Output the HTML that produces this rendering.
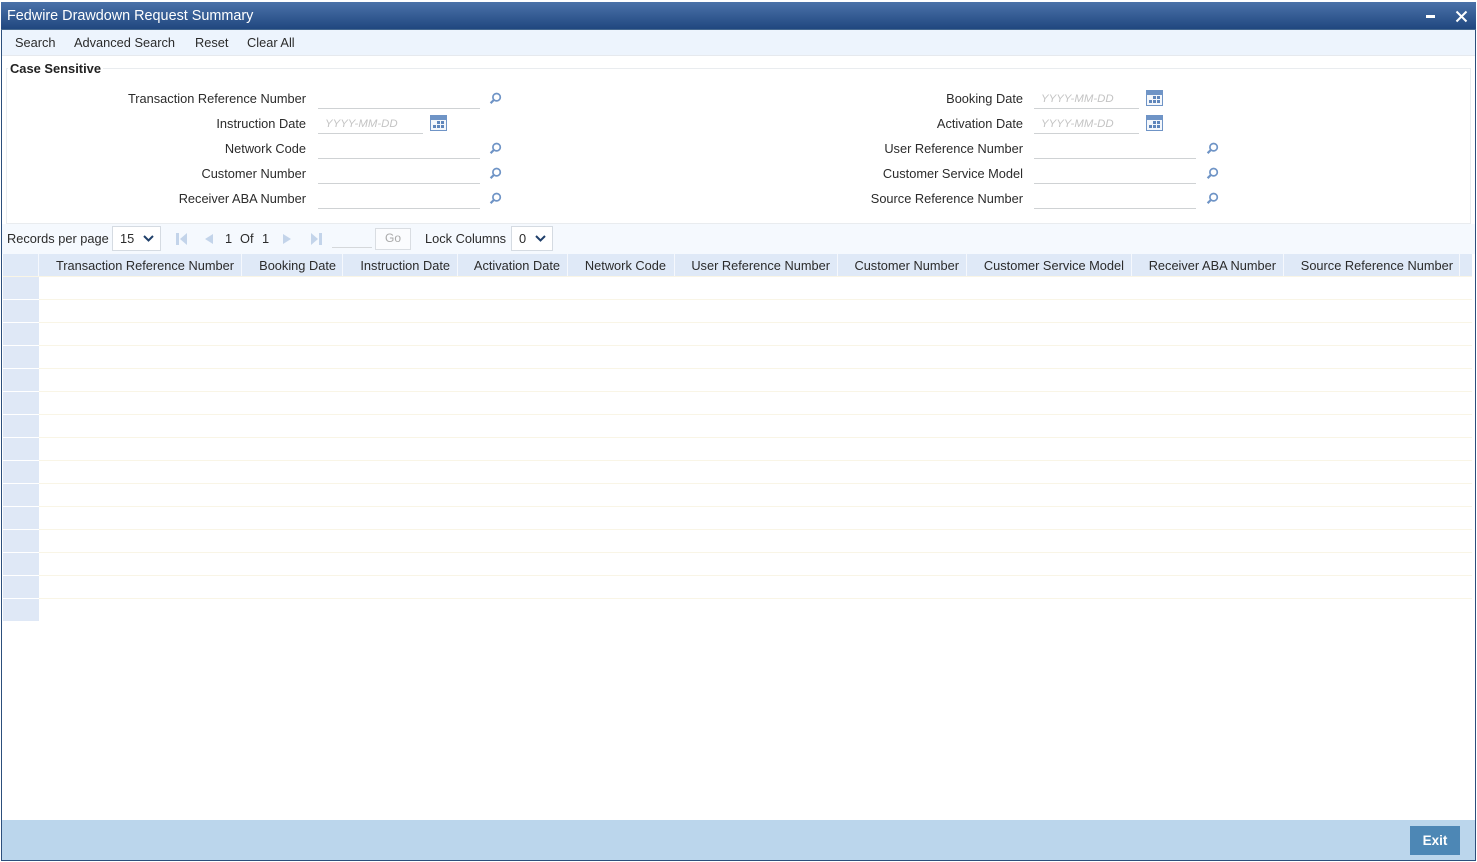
<!DOCTYPE html>
<html><head><meta charset="utf-8"><title>Fedwire Drawdown Request Summary</title>
<style>
html,body{margin:0;padding:0}
body{width:1477px;height:862px;position:relative;overflow:hidden;background:#fff;font-family:"Liberation Sans",Arial,sans-serif;font-size:12.8px;color:#2b2b2b}
.a{position:absolute}
.t{position:absolute;white-space:nowrap;line-height:16px}
.l{position:absolute;white-space:nowrap;line-height:16px;text-align:right}
.u{position:absolute;height:1px;background:#cfd2d4}
.ph{position:absolute;font-style:italic;font-size:11.4px;color:#c4c4c4;line-height:14px;white-space:nowrap}
.h{position:absolute;top:254px;height:22px;background:#dfe9f7;border-right:1px solid #f5f8fd;box-sizing:border-box;line-height:23px;white-space:nowrap;text-align:right;padding-right:7px}
.r{position:absolute;left:39px;width:1433px;height:1px;background:#f9f5e6}
.rh{position:absolute;left:3px;width:36px;height:22px;background:#dfe8f6}
svg{position:absolute;display:block}
</style></head><body>
<!-- frame -->
<div class="a" style="left:1px;top:2px;width:1475px;height:859px;box-sizing:border-box;border:1px solid #2c4f7c"></div>
<!-- title -->
<div class="a" style="left:1px;top:2px;width:1475px;height:28px;background:linear-gradient(#4b72a9,#20477f);border-bottom:1px solid #47698f;box-sizing:border-box"></div>
<div class="t" style="left:7px;top:8px;color:#fff;font-size:14.4px">Fedwire Drawdown Request Summary</div>
<div class="a" style="left:1426px;top:15px;width:9px;height:3px;background:#fff"></div>
<svg style="left:1455px;top:10px" width="13" height="13" viewBox="0 0 13 13"><path d="M1.500 1.500L11.500 11.500M11.500 1.500L1.500 11.500" stroke="#fff" stroke-width="2"/></svg>
<!-- toolbar -->
<div class="a" style="left:2px;top:30px;width:1473px;height:26px;background:#edf4fd;border-bottom:1px solid #e6e9ee;box-sizing:border-box"></div>
<div class="t" style="left:15px;top:35px">Search</div>
<div class="t" style="left:74px;top:35px">Advanced Search</div>
<div class="t" style="left:195px;top:35px">Reset</div>
<div class="t" style="left:247px;top:35px">Clear All</div>
<!-- fieldset -->
<div class="a" style="left:6px;top:68px;width:1465px;height:156px;border:1px solid #e9ecef;box-sizing:border-box"></div>
<div class="t" style="left:8px;top:61px;font-weight:bold;background:#fff;padding:0 2px;font-size:12.9px;color:#222">Case Sensitive</div>
<!-- left labels -->
<div class="l" style="right:1171px;top:91px">Transaction Reference Number</div>
<div class="l" style="right:1171px;top:116px">Instruction Date</div>
<div class="l" style="right:1171px;top:141px">Network Code</div>
<div class="l" style="right:1171px;top:166px">Customer Number</div>
<div class="l" style="right:1171px;top:191px">Receiver ABA Number</div>
<div class="u" style="left:318px;top:108px;width:162px"></div>
<div class="u" style="left:318px;top:133px;width:105px"></div>
<div class="u" style="left:318px;top:158px;width:162px"></div>
<div class="u" style="left:318px;top:183px;width:162px"></div>
<div class="u" style="left:318px;top:208px;width:162px"></div>
<div class="ph" style="left:325px;top:117px">YYYY-MM-DD</div>
<!-- right labels -->
<div class="l" style="right:454px;top:91px">Booking Date</div>
<div class="l" style="right:454px;top:116px">Activation Date</div>
<div class="l" style="right:454px;top:141px">User Reference Number</div>
<div class="l" style="right:454px;top:166px">Customer Service Model</div>
<div class="l" style="right:454px;top:191px">Source Reference Number</div>
<div class="u" style="left:1034px;top:108px;width:105px"></div>
<div class="u" style="left:1034px;top:133px;width:105px"></div>
<div class="u" style="left:1034px;top:158px;width:162px"></div>
<div class="u" style="left:1034px;top:183px;width:162px"></div>
<div class="u" style="left:1034px;top:208px;width:162px"></div>
<div class="ph" style="left:1041px;top:92px">YYYY-MM-DD</div>
<div class="ph" style="left:1041px;top:117px">YYYY-MM-DD</div>
<!-- search icons -->
<svg style="left:489px;top:92px" width="13" height="13" viewBox="0 0 13 13"><circle cx="7.600" cy="5.200" r="3.700" fill="none" stroke="#6f94c6" stroke-width="1.700"/><path d="M4.800 8L1.600 11.200" stroke="#6f94c6" stroke-width="2.200"/></svg>
<svg style="left:489px;top:142px" width="13" height="13" viewBox="0 0 13 13"><circle cx="7.600" cy="5.200" r="3.700" fill="none" stroke="#6f94c6" stroke-width="1.700"/><path d="M4.800 8L1.600 11.200" stroke="#6f94c6" stroke-width="2.200"/></svg>
<svg style="left:489px;top:167px" width="13" height="13" viewBox="0 0 13 13"><circle cx="7.600" cy="5.200" r="3.700" fill="none" stroke="#6f94c6" stroke-width="1.700"/><path d="M4.800 8L1.600 11.200" stroke="#6f94c6" stroke-width="2.200"/></svg>
<svg style="left:489px;top:192px" width="13" height="13" viewBox="0 0 13 13"><circle cx="7.600" cy="5.200" r="3.700" fill="none" stroke="#6f94c6" stroke-width="1.700"/><path d="M4.800 8L1.600 11.200" stroke="#6f94c6" stroke-width="2.200"/></svg>
<svg style="left:1206px;top:142px" width="13" height="13" viewBox="0 0 13 13"><circle cx="7.600" cy="5.200" r="3.700" fill="none" stroke="#6f94c6" stroke-width="1.700"/><path d="M4.800 8L1.600 11.200" stroke="#6f94c6" stroke-width="2.200"/></svg>
<svg style="left:1206px;top:167px" width="13" height="13" viewBox="0 0 13 13"><circle cx="7.600" cy="5.200" r="3.700" fill="none" stroke="#6f94c6" stroke-width="1.700"/><path d="M4.800 8L1.600 11.200" stroke="#6f94c6" stroke-width="2.200"/></svg>
<svg style="left:1206px;top:192px" width="13" height="13" viewBox="0 0 13 13"><circle cx="7.600" cy="5.200" r="3.700" fill="none" stroke="#6f94c6" stroke-width="1.700"/><path d="M4.800 8L1.600 11.200" stroke="#6f94c6" stroke-width="2.200"/></svg>
<!-- calendar icons -->
<svg style="left:430px;top:115px" width="17" height="16" viewBox="0 0 17 16"><rect width="17" height="16" fill="#6f94c6"/><rect x="1" y="5" width="15" height="10" fill="#f4f7fb"/><path d="M7 6h3v3H7zM11 6h3v3h-3zM3 10h3v3H3zM7 10h3v3H7zM11 10h3v3h-3z" fill="#5f86bb"/></svg>
<svg style="left:1146px;top:90px" width="17" height="16" viewBox="0 0 17 16"><rect width="17" height="16" fill="#6f94c6"/><rect x="1" y="5" width="15" height="10" fill="#f4f7fb"/><path d="M7 6h3v3H7zM11 6h3v3h-3zM3 10h3v3H3zM7 10h3v3H7zM11 10h3v3h-3z" fill="#5f86bb"/></svg>
<svg style="left:1146px;top:115px" width="17" height="16" viewBox="0 0 17 16"><rect width="17" height="16" fill="#6f94c6"/><rect x="1" y="5" width="15" height="10" fill="#f4f7fb"/><path d="M7 6h3v3H7zM11 6h3v3h-3zM3 10h3v3H3zM7 10h3v3H7zM11 10h3v3h-3z" fill="#5f86bb"/></svg>
<!-- pager -->
<div class="a" style="left:2px;top:224px;width:1473px;height:30px;background:#f5f9fe"></div>
<div class="t" style="left:7px;top:231px">Records per page</div>
<div class="a" style="left:112px;top:226px;width:49px;height:25px;background:#fff;border:1px solid #d5dbe2;box-sizing:border-box"></div>
<div class="t" style="left:120px;top:231px">15</div>
<svg style="left:143px;top:235px" width="11" height="7" viewBox="0 0 11 7"><path d="M1 1l4.500 4.500L10 1" fill="none" stroke="#1f3f6a" stroke-width="2"/></svg>
<svg style="left:175px;top:232px" width="14" height="14" viewBox="0 0 14 14"><path d="M1 1h3v12H1zM12 1v12L5 7z" fill="#c3d4ea"/></svg>
<svg style="left:204px;top:233px" width="10" height="12" viewBox="0 0 10 12"><path d="M9 1v10L1 6z" fill="#c3d4ea"/></svg>
<div class="t" style="left:225px;top:231px">1</div>
<div class="t" style="left:240px;top:231px">Of</div>
<div class="t" style="left:262px;top:231px">1</div>
<svg style="left:282px;top:233px" width="10" height="12" viewBox="0 0 10 12"><path d="M1 1v10L9 6z" fill="#c3d4ea"/></svg>
<svg style="left:309px;top:232px" width="14" height="14" viewBox="0 0 14 14"><path d="M2 1v12L9 7zM10 1h3v12h-3z" fill="#c3d4ea"/></svg>
<div class="u" style="left:332px;top:247px;width:40px;background:#d5d8db"></div>
<div class="a" style="left:375px;top:228px;width:36px;height:22px;background:#fbfcfe;border:1px solid #d9dde2;box-sizing:border-box;text-align:center;line-height:19px;font-size:12px;color:#a9a9a9">Go</div>
<div class="t" style="left:425px;top:231px">Lock Columns</div>
<div class="a" style="left:511px;top:226px;width:42px;height:25px;background:#fff;border:1px solid #d5dbe2;box-sizing:border-box"></div>
<div class="t" style="left:519px;top:231px">0</div>
<svg style="left:535px;top:235px" width="11" height="7" viewBox="0 0 11 7"><path d="M1 1l4.500 4.500L10 1" fill="none" stroke="#1f3f6a" stroke-width="2"/></svg>
<!-- grid header -->
<div class="h" style="left:3px;width:36px"></div>
<div class="h" style="left:39px;width:203px">Transaction Reference Number</div>
<div class="h" style="left:242px;width:101px;padding-right:6px">Booking Date</div>
<div class="h" style="left:343px;width:115px">Instruction Date</div>
<div class="h" style="left:458px;width:110px">Activation Date</div>
<div class="h" style="left:568px;width:107px;padding-right:8px">Network Code</div>
<div class="h" style="left:675px;width:163px">User Reference Number</div>
<div class="h" style="left:838px;width:129px">Customer Number</div>
<div class="h" style="left:967px;width:165px">Customer Service Model</div>
<div class="h" style="left:1132px;width:152px">Receiver ABA Number</div>
<div class="h" style="left:1284px;width:176px;padding-right:6px">Source Reference Number</div>
<div class="h" style="left:1460px;width:12px;border:0;padding:0"></div>
<div class="a" style="left:3px;top:276px;width:1469px;height:1px;background:#f9f5e6"></div>
<!-- row lines -->
<div class="r" style="top:299px"></div><div class="r" style="top:322px"></div><div class="r" style="top:345px"></div><div class="r" style="top:368px"></div><div class="r" style="top:391px"></div><div class="r" style="top:414px"></div><div class="r" style="top:437px"></div><div class="r" style="top:460px"></div><div class="r" style="top:483px"></div><div class="r" style="top:506px"></div><div class="r" style="top:529px"></div><div class="r" style="top:552px"></div><div class="r" style="top:575px"></div><div class="r" style="top:598px"></div>
<!-- row headers -->
<div class="rh" style="top:277px"></div><div class="rh" style="top:300px"></div><div class="rh" style="top:323px"></div><div class="rh" style="top:346px"></div><div class="rh" style="top:369px"></div><div class="rh" style="top:392px"></div><div class="rh" style="top:415px"></div><div class="rh" style="top:438px"></div><div class="rh" style="top:461px"></div><div class="rh" style="top:484px"></div><div class="rh" style="top:507px"></div><div class="rh" style="top:530px"></div><div class="rh" style="top:553px"></div><div class="rh" style="top:576px"></div><div class="rh" style="top:599px"></div>
<!-- footer -->
<div class="a" style="left:2px;top:820px;width:1473px;height:40px;background:#bbd6ec"></div>
<div class="a" style="left:1410px;top:826px;width:50px;height:29px;background:#4d87b5;color:#fff;font-weight:bold;font-size:13.500px;text-align:center;line-height:29px">Exit</div>
</body></html>
